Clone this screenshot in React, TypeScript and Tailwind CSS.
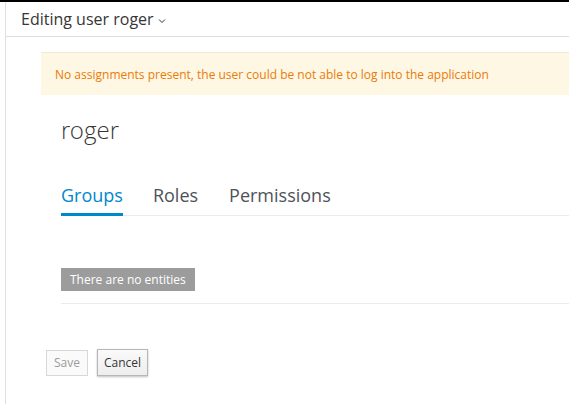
import React from "react";

const tabs = ["Groups", "Roles", "Permissions"];

export default function App() {
  return (
    <div className="h-[404px] w-[569px] overflow-hidden bg-white font-['Open_Sans',sans-serif] text-[#363636]">
      {/* top bar */}
      <div className="h-[2px] bg-black" />
      <div className="ml-[5px] h-[402px] border-l border-[#e0e0e0]">
        {/* Header */}
        <div className="flex h-[35px] items-center border-b border-[#dedede] pl-[15px]">
          <span className="text-[16px] leading-none text-[#363636]">Editing user roger</span>
          <svg className="ml-[4px] mt-[3px]" width="8" height="6" viewBox="0 0 8 6">
            <path d="M1 1.5 L4 4.5 L7 1.5" fill="none" stroke="#363636" strokeWidth="1" />
          </svg>
        </div>

        {/* Alert */}
        <div className="ml-[35px] mt-[15px] flex h-[43px] items-center border-t border-[#f1ead0] bg-[#fdf7e3] pl-[14px] pt-[2px]">
          <span className="text-[12px] text-[#ec7a08]">
            No assignments present, the user could be not able to log into the application
          </span>
        </div>

        {/* Title */}
        <div className="ml-[55px] mt-[17px] font-['Open_Sans_Light','Open_Sans',sans-serif] text-[24px] font-light leading-[36px] text-[#363636]">
          roger
        </div>

        {/* Tabs */}
        <div className="ml-[55px] mt-[35px] flex border-b border-[#ebebeb]">
          {tabs.map((t, i) => (
            <div
              key={t}
              className={
                i === 0
                  ? "mr-[30px] -mb-px border-b-[3px] border-[#0088ce] pb-[5px] text-[18px] leading-[24px] text-[#0088ce]"
                  : "mr-[31px] pb-[8px] text-[18px] leading-[24px] text-[#4d5258]"
              }
            >
              {t}
            </div>
          ))}
        </div>

        {/* Empty state */}
        <div className="ml-[55px] mt-[50px] border-b border-[#ebebeb] pb-[12px]">
          <span className="inline-block h-[23px] bg-[#9c9c9c] px-[9px] text-[12px] leading-[23px] text-white">
            There are no entities
          </span>
        </div>

        {/* Buttons */}
        <div className="ml-[40px] mt-[45px] flex items-center gap-[9px]">
          <button className="h-[26px] border border-[#d8d8d8] bg-[#fafafa] px-[7px] text-[12px] text-[#9c9c9c]">
            Save
          </button>
          <button className="h-[27px] border border-[#b7b7b7] bg-gradient-to-b from-[#fafafa] to-[#ededed] px-[6px] text-[12px] text-[#363636] shadow-[0_1px_2px_rgba(0,0,0,0.25)]">
            Cancel
          </button>
        </div>
      </div>
    </div>
  );
}
